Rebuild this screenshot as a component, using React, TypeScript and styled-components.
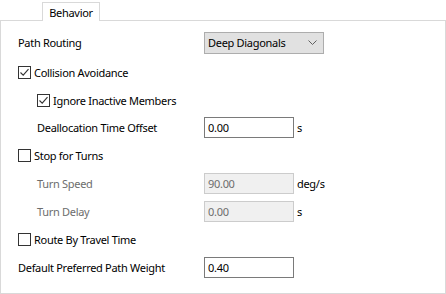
import styled, { createGlobalStyle } from 'styled-components';

const GlobalStyle = createGlobalStyle`
  html, body {
    margin: 0;
    padding: 0;
    background: #ffffff;
  }
  body {
    font-family: 'Noto Sans', 'Open Sans', sans-serif;
    font-size: 11px;
    letter-spacing: -0.3px;
    color: #000000;
  }
`;

const Check = ({ checked }: { checked: boolean }) => (
  <Box>
    {checked && (
      <svg width="11" height="11" viewBox="0 0 11 11">
        <path d="M1.5 5.5 L4.2 8.2 L9.5 2.2" fill="none" stroke="#333333" strokeWidth="1.1" />
      </svg>
    )}
  </Box>
);

const Chevron = () => (
  <svg width="9" height="5" viewBox="0 0 9 5">
    <path d="M0.5 0.5 L4.5 4.5 L8.5 0.5" fill="none" stroke="#606060" strokeWidth="1" />
  </svg>
);

const App = () => {
  return (
    <Page>
      <GlobalStyle />
      <TabStrip>
        <Tab>Behavior</Tab>
      </TabStrip>
      <Panel>
        <Row $h={29}>
          <Label>Path Routing</Label>
          <Select>
            <span>Deep Diagonals</span>
            <Chevron />
          </Select>
        </Row>
        <Row $h={30}>
          <CheckLabel>
            <Check checked />
            Collision Avoidance
          </CheckLabel>
        </Row>
        <Row $h={27}>
          <CheckLabel $indent>
            <Check checked />
            Ignore Inactive Members
          </CheckLabel>
        </Row>
        <Row $h={27}>
          <Label $indent>Deallocation Time Offset</Label>
          <Field>0.00</Field>
          <Unit>s</Unit>
        </Row>
        <Row $h={29}>
          <CheckLabel>
            <Check checked={false} />
            Stop for Turns
          </CheckLabel>
        </Row>
        <Row $h={27}>
          <Label $indent $disabled>Turn Speed</Label>
          <Field $disabled>90.00</Field>
          <Unit>deg/s</Unit>
        </Row>
        <Row $h={28}>
          <Label $indent $disabled>Turn Delay</Label>
          <Field $disabled>0.00</Field>
          <Unit>s</Unit>
        </Row>
        <Row $h={29}>
          <CheckLabel>
            <Check checked={false} />
            Route By Travel Time
          </CheckLabel>
        </Row>
        <Row $h={27}>
          <Label>Default Preferred Path Weight</Label>
          <Field>0.40</Field>
        </Row>
      </Panel>
    </Page>
  );
};

export default App;

const Page = styled.div`
  width: 446px;
  height: 294px;
  display: flex;
  flex-direction: column;
  box-sizing: border-box;
`;

const TabStrip = styled.div`
  height: 20px;
  display: flex;
  align-items: flex-end;
  padding-left: 42px;
`;

const Tab = styled.div`
  width: 58px;
  height: 19px;
  box-sizing: border-box;
  border: 1px solid #d9d9d9;
  border-bottom: none;
  background: #ffffff;
  display: flex;
  align-items: center;
  justify-content: center;
  margin-bottom: -1px;
  position: relative;
  z-index: 1;
`;

const Panel = styled.div`
  flex: 1;
  box-sizing: border-box;
  border: 1px solid #d9d9d9;
  padding: 7px 0 0 17px;
  display: flex;
  flex-direction: column;
`;

const Row = styled.div<{ $h: number }>`
  height: ${(p) => p.$h}px;
  display: flex;
  align-items: center;
`;

const Label = styled.div<{ $indent?: boolean; $disabled?: boolean }>`
  width: 186px;
  box-sizing: border-box;
  padding-left: ${(p) => (p.$indent ? 19 : 0)}px;
  color: ${(p) => (p.$disabled ? '#6d6d6d' : '#000000')};
  white-space: nowrap;
`;

const CheckLabel = styled.div<{ $indent?: boolean }>`
  display: flex;
  align-items: center;
  gap: 3px;
  padding-left: ${(p) => (p.$indent ? 19 : 0)}px;
  white-space: nowrap;
`;

const Box = styled.span`
  width: 13px;
  height: 13px;
  box-sizing: border-box;
  border: 1px solid #333333;
  background: #ffffff;
  display: inline-flex;
  align-items: center;
  justify-content: center;
`;

const Select = styled.div`
  width: 120px;
  height: 22px;
  box-sizing: border-box;
  border: 1px solid #adadad;
  background: #e1e1e1;
  display: flex;
  align-items: center;
  justify-content: space-between;
  padding: 0 6px 0 3px;
`;

const Field = styled.div<{ $disabled?: boolean }>`
  width: 90px;
  height: 21px;
  box-sizing: border-box;
  border: 1px solid ${(p) => (p.$disabled ? '#cccccc' : '#7a7a7a')};
  background: ${(p) => (p.$disabled ? '#f0f0f0' : '#ffffff')};
  color: ${(p) => (p.$disabled ? '#6d6d6d' : '#000000')};
  display: flex;
  align-items: center;
  padding-left: 3px;
`;

const Unit = styled.span`
  margin-left: 3px;
`;
